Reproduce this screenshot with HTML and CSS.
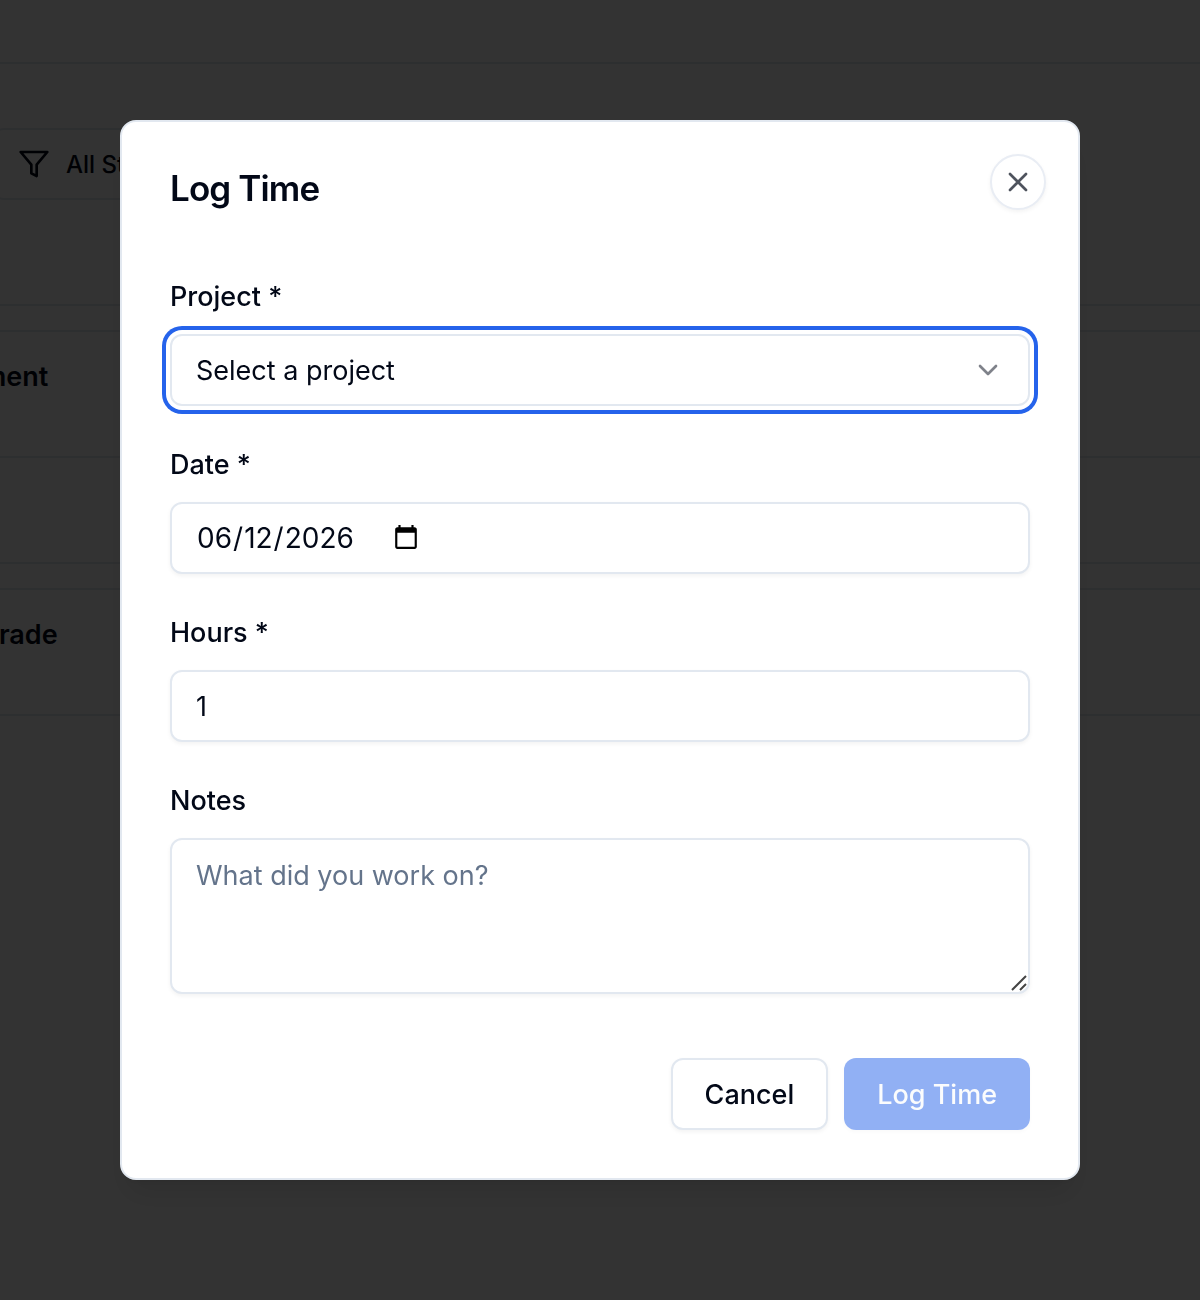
FILE: index.html
```html
<!DOCTYPE html>
<html lang="en">
<head>
    <meta charset="UTF-8">
    <meta name="viewport" content="width=device-width, initial-scale=1.0">
    <title>Log Time</title>
    <link rel="stylesheet" href="styles.css">
</head>
<body>
    <div class="page">
        <header class="topbar"></header>
        <div class="filter">
            <svg class="icon" viewBox="0 0 24 24"><path d="M22 3H2l8 9.46V19l4 2v-8.54L22 3z"/></svg>
            <span>All Status</span>
        </div>
        <div class="card card-plain"></div>
        <div class="card">
            <div class="card-title">ment</div>
            <div class="card-body"></div>
        </div>
        <div class="card">
            <div class="card-title">grade</div>
        </div>
    </div>

    <div class="overlay">
        <div class="dialog" role="dialog" aria-labelledby="dialogTitle">
            <h2 id="dialogTitle">Log Time</h2>
            <button type="button" class="close" aria-label="Close">
                <svg class="icon" viewBox="0 0 24 24"><path d="M18 6 6 18M6 6l12 12"/></svg>
            </button>
            <form id="logForm">
                <div class="field">
                    <label for="project">Project *</label>
                    <div class="control-wrap">
                        <select id="project" name="project" class="control focused">
                            <option>Select a project</option>
                        </select>
                        <svg class="icon chevron" viewBox="0 0 24 24"><path d="m6 9 6 6 6-6"/></svg>
                    </div>
                </div>
                <div class="field">
                    <label for="date">Date *</label>
                    <input type="date" id="date" name="date" class="control" value="2026-06-12">
                </div>
                <div class="field">
                    <label for="hours">Hours *</label>
                    <input type="number" id="hours" name="hours" class="control" value="1">
                </div>
                <div class="field">
                    <label for="notes">Notes</label>
                    <div class="control-wrap">
                        <textarea id="notes" name="notes" class="control" placeholder="What did you work on?"></textarea>
                        <svg class="grip" viewBox="0 0 16 16"><path d="M1 15 15 1M9 15l6-6"/></svg>
                    </div>
                </div>
                <div class="actions">
                    <button type="button" class="btn btn-outline">Cancel</button>
                    <button type="submit" class="btn btn-primary" disabled>Log Time</button>
                </div>
            </form>
        </div>
    </div>
</body>
</html>
```

FILE: styles.css
```css
* {
    box-sizing: border-box;
}

body {
    margin: 0;
    font-family: Inter, "Liberation Sans", sans-serif;
    font-size: 27px;
    color: #020817;
    background-color: #fff;
    overflow: hidden;
}

.page {
    min-height: 100vh;
}

.icon {
    display: block;
    flex: none;
    width: 32px;
    height: 32px;
    fill: none;
    stroke: currentColor;
    stroke-width: 2;
    stroke-linecap: round;
    stroke-linejoin: round;
}

/* page behind the dialog */
.topbar {
    height: 64px;
    border-bottom: 2px solid #e2e8f0;
}

.filter {
    display: flex;
    align-items: center;
    gap: 16px;
    width: 360px;
    height: 72px;
    margin: 64px 0 0 -8px;
    padding: 0 24px;
    border: 2px solid #e2e8f0;
    border-radius: 12px;
    font-size: 24px;
    font-weight: 500;
}

.card {
    margin: 0 -24px 24px;
    border: 2px solid #e2e8f0;
}

.card-plain {
    height: 106px;
    border-top: none;
}

.card-title {
    height: 124px;
    padding: 28px 4px;
    line-height: 34px;
    font-weight: 600;
}

.card-body {
    height: 106px;
    border-top: 2px solid #e2e8f0;
}

/* dialog */
.overlay {
    position: fixed;
    inset: 0;
    display: flex;
    align-items: center;
    justify-content: center;
    padding: 24px;
    background-color: rgba(0, 0, 0, 0.8);
}

.dialog {
    position: relative;
    width: 100%;
    max-width: 960px;
    padding: 48px;
    background-color: #fff;
    border: 2px solid #e2e8f0;
    border-radius: 16px;
    box-shadow: 0 20px 30px -6px rgba(0, 0, 0, 0.1), 0 8px 12px -8px rgba(0, 0, 0, 0.1);
}

h2 {
    margin: 0 0 76px;
    font-size: 35px;
    line-height: 36px;
    font-weight: 600;
    letter-spacing: -0.025em;
}

.close {
    position: absolute;
    top: 32px;
    right: 32px;
    display: flex;
    align-items: center;
    justify-content: center;
    width: 56px;
    height: 56px;
    padding: 0;
    color: #4e535d;
    background-color: #fff;
    border: 2px solid #e9edf4;
    border-radius: 50%;
    box-shadow: 0 2px 4px rgba(0, 0, 0, 0.05);
}

.field {
    margin-bottom: 44px;
}

label {
    display: block;
    margin-bottom: 22px;
    line-height: 30px;
    font-weight: 500;
}

.control {
    display: block;
    width: 100%;
    height: 72px;
    padding: 0 24px;
    font: inherit;
    color: inherit;
    background-color: #fff;
    border: 2px solid #e2e8f0;
    border-radius: 12px;
    box-shadow: 0 2px 4px rgba(0, 0, 0, 0.05);
    outline: none;
    appearance: none;
}

.focused {
    box-shadow: 0 0 0 4px #fff, 0 0 0 8px #2563eb;
}

.control-wrap {
    position: relative;
}

.chevron {
    position: absolute;
    top: 20px;
    right: 26px;
    opacity: 0.5;
    pointer-events: none;
}

input[type="date"] {
    font-size: 28px;
}

input[type="date"]::-webkit-datetime-edit {
    flex: none;
}

input[type="date"]::-webkit-calendar-picker-indicator {
    width: 28px;
    height: 28px;
    margin-left: -14px;
    padding: 0;
}

input[type="number"]::-webkit-inner-spin-button {
    display: none;
}

textarea.control {
    height: 156px;
    padding: 16px 24px;
    line-height: 40px;
    resize: vertical;
}

textarea::placeholder {
    color: #64748b;
}

textarea::-webkit-resizer {
    background-color: transparent;
}

.grip {
    position: absolute;
    right: 3px;
    bottom: 3px;
    width: 16px;
    height: 16px;
    fill: none;
    stroke: #444;
    stroke-width: 2;
    pointer-events: none;
}

.actions {
    display: flex;
    justify-content: flex-end;
    gap: 16px;
    margin-top: 64px;
}

.btn {
    height: 72px;
    padding: 0 33px;
    font: inherit;
    font-weight: 500;
    border-radius: 12px;
    box-shadow: 0 2px 4px rgba(0, 0, 0, 0.05);
}

.btn-outline {
    padding: 0 32px;
    color: #020817;
    background-color: #fff;
    border: 2px solid #e2e8f0;
}

.btn-primary {
    color: #f8fafc;
    background-color: #2563eb;
    border: none;
}

.btn:disabled {
    opacity: 0.5;
}
```
